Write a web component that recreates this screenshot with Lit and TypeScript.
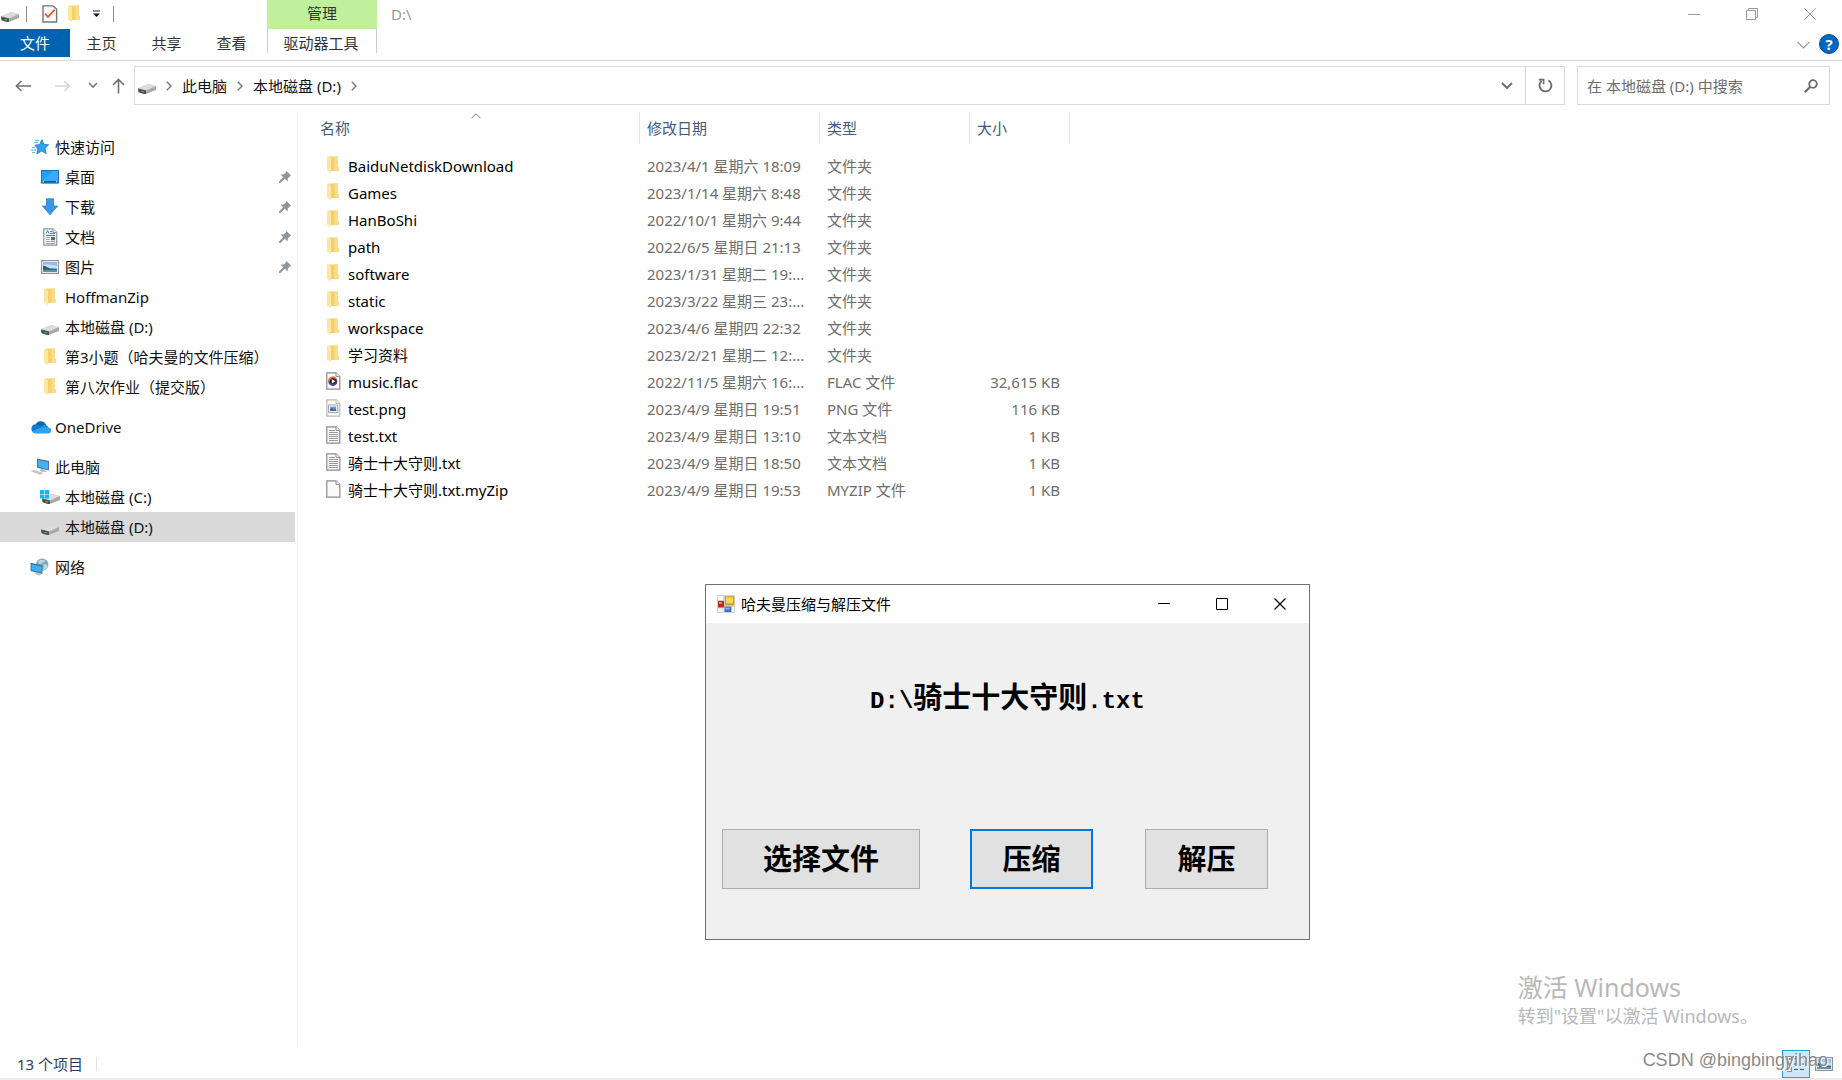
import { LitElement, html, css, svg, nothing, type TemplateResult } from "lit";
import { customElement } from "lit/decorators.js";
import { classMap } from "lit/directives/class-map.js";

const icon = (w: number, h: number, body: unknown) =>
  html`<svg class="ico" width=${w} height=${h} viewBox="0 0 ${w} ${h}" aria-hidden="true">${body}</svg>`;

const driveShape = svg`
  <path d="M0 7.5 L9 3.5 Q10 3 11 3.3 L18 5.2 V9 L9 12.6 Q7 13.3 5 12.6 L0.6 11 Z" fill="#a9a9a9"/>
  <path d="M0 7.2 L9 3.2 Q10 2.8 11 3.1 L18 5 L8 9.4 Z" fill="#dcdcdc"/>
  <path d="M0 7.4 L8 9.4 V13 L5 12.8 L0.6 11.2 Z" fill="#4c4f4c"/>
  <rect x="3.5" y="10" width="2.4" height="1.4" fill="#2fc24a"/>`;

const folderShape = svg`
  <path d="M3 0.5 H12 V11 L13 11.3 V15 H3 Z" fill="#f5d06f"/>
  <path d="M8.5 0.5 H12 V11 L13 11.3 V15 H8.5 Z" fill="#fbdc87"/>
  <path d="M1 0.5 H3 L5 2.6 V16.2 L4.2 17 L1 14.6 Z" fill="#ffe7a3"/>`;

const pageShape = (stroke = "#8a8a8a", fill = "#fbfbfb") => svg`
  <path d="M0.8 0.8 H10 L13.8 4.4 V17.2 H0.8 Z" fill=${fill} stroke=${stroke} stroke-width="1.2"/>
  <path d="M10 0.8 V4.4 H13.8" fill="#fff" stroke=${stroke} stroke-width="1"/>`;

const lines = svg`<path d="M3 4.5H9M3 6.5H12M3 8.5H12M3 10.5H12M3 12.5H12M3 14.5H12" stroke="#9a9a9a" stroke-width="1"/>`;

const icons: Record<string, () => TemplateResult> = {
  drive: () => icon(18, 16, svg`<g transform="translate(0 3)">${driveShape}</g>`),
  folder: () => icon(14, 18, folderShape),
  audio: () => icon(15, 18, svg`${pageShape()}
    <circle cx="6.8" cy="9.4" r="4.4" fill="#3a3350"/>
    <path d="M3 9.4 A4 4 0 0 1 10 6.6" fill="none" stroke="#ef6a3a" stroke-width="1.6"/>
    <path d="M3.2 10.8 A4 4 0 0 0 10.6 10.6" fill="none" stroke="#6f4d9b" stroke-width="1.2"/>
    <circle cx="6.9" cy="9.3" r="2.6" fill="#222"/>
    <path d="M5.8 6.9 L9.2 9.3 L5.8 11.7 Z" fill="#fff"/>`),
  image: () => icon(15, 18, svg`${pageShape("#b9b9b9")}
    <rect x="2.6" y="6" width="9.2" height="7.6" fill="#fff" stroke="#a5a5a5"/>
    <rect x="4.2" y="7.6" width="6" height="4.4" fill="#5f97dc"/>
    <path d="M4.2 9.8 L6 9.2 L8 10.4 L10.2 10.6 V12 H4.2 Z" fill="#3b6a78"/>`),
  text: () => icon(15, 18, svg`${pageShape()}${lines}`),
  blank: () => icon(15, 18, pageShape("#8a8a8a", "#fafafa")),
  star: () => icon(18, 16, svg`
    <path d="M11 0.6 L12.8 5.4 L17.6 5.8 L14 9.2 L15.2 14.6 L10.6 12 L5.8 14.8 L7 9.8 L3.8 6.2 L8.6 5.6 Z" fill="#2ea4ef" stroke="#1578c2" stroke-width="0.8"/>
    <path d="M4 1.6H8M3 3.6H7M1 8.6H4.4M0 11.2H5M1 13.6H4" stroke="#5bb3ee" stroke-width="1"/>`),
  desktop: () => icon(18, 14, svg`
    <rect x="0.5" y="0.5" width="17" height="12.6" fill="#1ea0fb" stroke="#1873b8"/>
    <path d="M1 11 L12 1 H17 V11 Z" fill="#37adff"/>
    <rect x="1" y="11" width="16" height="1.6" fill="#0f5f9f"/>
    <path d="M1.5 11.8H3M15 11.8H16.5" stroke="#fff" stroke-width="1"/>`),
  download: () => icon(18, 18, svg`
    <path d="M5.5 0.8 H12.5 V8 H16.6 L9 16.8 L1.4 8 H5.5 Z" fill="#3a96e6" stroke="#2a7cc8" stroke-width="0.8"/>`),
  document: () => icon(18, 18, svg`
    <g transform="translate(2 0)">${pageShape("#8d9299")}
    <path d="M3 5.6 L4.6 2.6 L6 5.6M7 3.4H9.4M7 5.4H12M3 7.5H12" stroke="#2b83c9" fill="none"/>
    <path d="M3 9.5H7M3 11.5H7M3 13.5H12M3 15.5H12" stroke="#a3a9af"/>
    <rect x="8" y="9" width="4" height="3.2" fill="#3f6f9c"/></g>`),
  picture: () => icon(18, 14, svg`
    <rect x="0.6" y="0.6" width="16.8" height="12.8" fill="#fff" stroke="#8d9299" stroke-width="1.2"/>
    <rect x="2" y="2" width="14" height="10" fill="#8cbcf2"/>
    <path d="M2 5 Q6 3 16 6 V8 H2 Z" fill="#c7e0fa"/>
    <path d="M2 5.4 L5 6.4 L9 8.6 L16 9 V10 H2 Z" fill="#2f6257"/>
    <path d="M2 9.8 H16 V12 H2 Z" fill="#5b93b5"/>`),
  cloud: () => icon(21, 14, svg`
    <path d="M5.6 4.6 A5.6 5.6 0 0 1 15.4 3.6 L16.4 5.4 L10 9 Z" fill="#0f62b5"/>
    <path d="M4.6 13 A4.5 4.5 0 0 1 5 4.3 Q8 3.8 11 6.6 L5 13 Z" fill="#0a78d4"/>
    <path d="M11 6.4 Q13 4.4 15.8 5 A4.2 4.2 0 0 1 18.6 7.8 L12 9 Z" fill="#1590df"/>
    <path d="M2 11.6 L11 7.6 L18.8 7.6 A2.9 2.9 0 0 1 17.8 13.4 H5 Q3 13.2 2 11.6 Z" fill="#2aa4ea"/>`),
  computer: () => icon(20, 18, svg`
    <path d="M7 0.6 L19 3 V12.6 L7 9.8 Z" fill="#4f6f86"/>
    <path d="M8 2 L18.2 4 V11.4 L8 8.8 Z" fill="#3fb2fb"/>
    <path d="M11 11 L14 11.8 L17 14 L13 14.2 L9.4 12.8 Z" fill="#b6bcc2"/>
    <path d="M0.6 13.2 L4 11.8 L13.4 15 L10 17 Z" fill="#d5d9dd"/>
    <path d="M2.4 13.2 L11.4 16M4.6 12.6 L12.4 15.2" stroke="#aab0b6" stroke-width="0.6"/>`),
  windrive: () => icon(20, 16, svg`
    <g transform="translate(2 2)">${driveShape}</g>
    <path d="M0 1 H4.4 V5 H0Z M5 1 H9 V5 H5Z M0 5.6 H4.4 V9.4 H0Z M5 5.6 H9 V9.4 H5Z" fill="#14b4f0"/>`),
  network: () => icon(20, 18, svg`
    <circle cx="12.2" cy="6.6" r="6.2" fill="#7fa9bd"/>
    <path d="M8 3 Q12 0.6 15 2.6 Q13 6 9 6 Z M14 6 Q18 6 17.6 9 Q16 12 13 12 Z" fill="#b9d6e2"/>
    <path d="M0.6 4.8 L12.4 7.6 V16 L0.6 13 Z" fill="#40718f"/>
    <path d="M1.6 6.2 L11.6 8.6 V14.6 L1.6 12 Z" fill="#3db0fa"/>
    <path d="M4 15 L7 15 L11.6 16.4 L8.6 17.4 Z" fill="#b4bac0"/>`),
  pin: () => icon(12, 12, svg`
    <path d="M7.4 0 L12 4.6 L10.8 5.4 L8.8 7.4 L8.6 10.4 L5.8 7.8 L1.4 12 L0 12 V10.6 L4.2 6.2 L1.6 3.6 L4.8 3.4 L6.8 1.4 Z" fill="#8c969f"/>`),
  check: () => icon(16, 18, svg`
    <path d="M1 0.9 H11 L14.6 4 V17 H1 Z" fill="#fcfcfc" stroke="#757575" stroke-width="1.4"/>
    <path d="M3 8.6 L6 12 L12.6 4.6" fill="none" stroke="#f0531c" stroke-width="1.8"/>`),
  form: () => icon(18, 18, svg`
    <rect width="18" height="18" fill="#d2d2d2"/>
    <rect x="1" y="1" width="5" height="4" fill="#fff"/><rect x="15" y="12" width="2" height="5" fill="#fff"/>
    <rect x="1" y="6" width="6" height="6.4" fill="#b52a1d"/><rect x="2" y="7" width="3" height="2" fill="#e88573"/>
    <rect x="8" y="1.4" width="9.2" height="8.8" fill="#d09b16"/><rect x="9" y="2.4" width="7" height="6" fill="#ffd84d"/>
    <rect x="7.6" y="11.6" width="6.6" height="5.4" fill="#3a6ed0"/><rect x="8.6" y="12.6" width="4" height="2" fill="#8fb4f4"/>
    <rect x="1" y="13.4" width="5.4" height="3.6" fill="#f2f2f2"/>`),
};

const stroke = (w: number, h: number, d: string, color: string, width = 1) =>
  icon(w, h, svg`<path d=${d} fill="none" stroke=${color} stroke-width=${width}/>`);

interface NavItem { icon: string; label: string; root?: boolean; pinned?: boolean; current?: boolean; }
const groups: NavItem[][] = [
  [
    { icon: "star", label: "快速访问", root: true },
    { icon: "desktop", label: "桌面", pinned: true },
    { icon: "download", label: "下载", pinned: true },
    { icon: "document", label: "文档", pinned: true },
    { icon: "picture", label: "图片", pinned: true },
    { icon: "folder", label: "HoffmanZip" },
    { icon: "drive", label: "本地磁盘 (D:)" },
    { icon: "folder", label: "第3小题（哈夫曼的文件压缩）" },
    { icon: "folder", label: "第八次作业（提交版）" },
  ],
  [{ icon: "cloud", label: "OneDrive", root: true }],
  [
    { icon: "computer", label: "此电脑", root: true },
    { icon: "windrive", label: "本地磁盘 (C:)" },
    { icon: "drive", label: "本地磁盘 (D:)", current: true },
  ],
  [{ icon: "network", label: "网络", root: true }],
];

const files: [string, string, string, string, string][] = [
  ["folder", "BaiduNetdiskDownload", "2023/4/1 星期六 18:09", "文件夹", ""],
  ["folder", "Games", "2023/1/14 星期六 8:48", "文件夹", ""],
  ["folder", "HanBoShi", "2022/10/1 星期六 9:44", "文件夹", ""],
  ["folder", "path", "2022/6/5 星期日 21:13", "文件夹", ""],
  ["folder", "software", "2023/1/31 星期二 19:...", "文件夹", ""],
  ["folder", "static", "2023/3/22 星期三 23:...", "文件夹", ""],
  ["folder", "workspace", "2023/4/6 星期四 22:32", "文件夹", ""],
  ["folder", "学习资料", "2023/2/21 星期二 12:...", "文件夹", ""],
  ["audio", "music.flac", "2022/11/5 星期六 16:...", "FLAC 文件", "32,615 KB"],
  ["image", "test.png", "2023/4/9 星期日 19:51", "PNG 文件", "116 KB"],
  ["text", "test.txt", "2023/4/9 星期日 13:10", "文本文档", "1 KB"],
  ["text", "骑士十大守则.txt", "2023/4/9 星期日 18:50", "文本文档", "1 KB"],
  ["blank", "骑士十大守则.txt.myZip", "2023/4/9 星期日 19:53", "MYZIP 文件", "1 KB"],
];

const base = css`
  * { box-sizing: border-box; }
  button, input { font: inherit; color: inherit; border: 0; background: none; padding: 0; margin: 0; flex: none; }
  a { color: inherit; text-decoration: none; }
  .ico { display: block; flex: none; }
`;

@customElement("explorer-header")
class ExplorerHeader extends LitElement {
  static styles = [base, css`
    :host { display: block; }
    .title { display: flex; height: 29px; color: #999; }
    .quick { width: 267px; display: flex; align-items: center; padding: 0 0 2px 1px; }
    .quick button { display: flex; justify-content: center; }
    .rule { width: 1px; height: 16px; background: #8f8f8f; }
    .q1 { margin-right: 7px; }
    .q2 { margin: 0 9px 0 15px; }
    .q3 { margin-right: 12px; }
    .q4 { margin-right: 13px; }
    .context { width: 110px; background: #c0f09b; color: #333; text-align: center; line-height: 26px; }
    .path { flex: 1; padding-left: 14px; line-height: 28px; }
    .controls { display: flex; padding-right: 3px; }
    .controls button { width: 58px; height: 27px; display: flex; align-items: center; justify-content: center; }
    .tabs { display: flex; height: 32px; border-bottom: 1px solid #d9dadb; color: #333; }
    .tabs button { width: 65px; height: 28px; line-height: 28px; padding-right: 2px; }
    .tabs .file { width: 70px; background: #0063b1; color: #fff; padding: 0; }
    .tabs .tool { width: 110px; margin-left: 2px; height: 24px; border: solid #ccc; border-width: 0 1px; }
    .fill { flex: 1; }
    .tabs .min { width: 22px; display: flex; align-items: center; justify-content: center; padding: 3px 0 0; }
    .tabs .help { width: 20px; height: 20px; margin: 5px 3px 0 5px; border-radius: 50%; background: #0067c6; border: 1px solid #114f8c; color: #fff; line-height: 18px; font-weight: 700; padding: 0; }
    .bar { display: flex; align-items: center; padding: 5px 12px 7px 15px; height: 51px; }
    .go { display: flex; align-items: center; justify-content: center; height: 32px; }
    .back { width: 17px; margin-right: 22px; }
    .fwd { width: 17px; margin-right: 16px; }
    .hist { width: 11px; margin-right: 13px; }
    .up { width: 14px; margin-right: 9px; }
    .address, .search { height: 39px; border: 1px solid #d9d9d9; display: flex; align-items: center; }
    .address { flex: 1; padding-left: 3px; gap: 10px; color: #111; }
    .address .end { width: 37px; height: 37px; display: flex; align-items: center; justify-content: center; }
    .address .refresh { width: 39px; border-left: 1px solid #d9d9d9; }
    .join { display: flex; }
    .search { width: 253px; margin-left: 12px; padding: 0 11px 0 9px; }
    .search input { flex: 1; min-width: 0; outline: none; color: #666; }
    .search input::placeholder { color: #6d6d6d; opacity: 1; }
  `];
  render() {
    const sep = stroke(6, 10, "M0.8 0.8 L5 5 L0.8 9.2", "#777", 1.4);
    return html`
      <div class="title">
        <div class="quick">
          <button class="q1" aria-label="驱动器">${icons.drive()}</button><span class="rule"></span>
          <button class="q2" aria-label="属性">${icons.check()}</button>
          <button class="q3" aria-label="新建文件夹">${icons.folder()}</button>
          <button class="q4" aria-label="自定义">${icon(7, 8, svg`<path d="M0 1H7" stroke="#222"/><path d="M0 3.6H7L3.5 7Z" fill="#111"/>`)}</button>
          <span class="rule"></span>
        </div>
        <div class="context">管理</div>
        <div class="path">D:\\</div>
        <div class="controls">
          <button aria-label="最小化">${stroke(12, 12, "M0 6.5H12", "#999")}</button>
          <button aria-label="还原">${stroke(12, 12, "M0.5 2.5H9.5V11.5H0.5Z M2.5 2.5V0.5H11.5V9.5H9.5", "#999")}</button>
          <button aria-label="关闭">${stroke(12, 12, "M0.3 0.3L11.7 11.7M11.7 0.3L0.3 11.7", "#999")}</button>
        </div>
      </div>
      <div class="tabs">
        <button class="file">文件</button><button>主页</button><button>共享</button><button>查看</button>
        <button class="tool">驱动器工具</button>
        <span class="fill"></span>
        <button class="min" aria-label="展开功能区">${stroke(13, 8, "M0.5 0.8L6.5 6.8L12.5 0.8", "#999", 1.2)}</button>
        <button class="help" aria-label="帮助">?</button>
      </div>
      <div class="bar">
        <button class="go back" aria-label="后退">${stroke(17, 12, "M16 6H1.4M6.4 1L1.4 6L6.4 11", "#707070", 1.6)}</button>
        <button class="go fwd" aria-label="前进">${stroke(17, 12, "M1 6H15.4M10.4 1L15.4 6L10.4 11", "#d4d4d4", 1.6)}</button>
        <button class="go hist" aria-label="历史">${stroke(10, 7, "M1 1L5 5L9 1", "#7a7a7a", 1.6)}</button>
        <button class="go up" aria-label="向上">${stroke(13, 16, "M6.5 15.6V1.6M1 7L6.5 1.5L12 7", "#707070", 1.6)}</button>
        <div class="address">
          ${icons.drive()}${sep}<a href="#pc">此电脑</a>${sep}<a href="#d">本地磁盘 (D:)</a>${sep}
          <span class="fill"></span>
          <div class="join">
            <button class="end" aria-label="地址列表">${stroke(12, 8, "M1 1L6 6L11 1", "#707070", 2)}</button>
            <button class="end refresh" aria-label="刷新">${icon(15, 15, svg`<path d="M3.6 2.8A6 6 0 1 0 10.4 2.2" fill="none" stroke="#6c6c6c" stroke-width="1.8"/><path d="M0.8 1.6H5.6V6.2" fill="none" stroke="#6c6c6c" stroke-width="1.6"/>`)}</button>
          </div>
        </div>
        <label class="search">
          <input type="text" aria-label="搜索" placeholder="在 本地磁盘 (D:) 中搜索">
          ${icon(14, 14, svg`<circle cx="9" cy="5" r="3.8" fill="none" stroke="#6a6a6a" stroke-width="1.8"/><path d="M6.2 7.8L0.8 13.2" stroke="#6a6a6a" stroke-width="2.2"/>`)}
        </label>
      </div>`;
  }
}

@customElement("explorer-nav")
class ExplorerNav extends LitElement {
  static styles = [base, css`
    :host { display: block; }
    nav { width: 298px; height: 100%; padding: 20px 2px 0 0; border-right: 1px solid #f3f3f3; display: flex; flex-direction: column; gap: 10px; }
    .item { display: flex; align-items: center; height: 30px; padding-left: 39px; color: #111; white-space: nowrap; }
    .item.root { padding-left: 29px; }
    .item.current { background: #d9d9d9; }
    .slot { width: 22px; display: flex; justify-content: center; margin-right: 4px; }
    .label { flex: 1; }
    .pin { margin-right: 4px; }
  `];
  render() {
    return html`<nav aria-label="导航">${groups.map((g) => html`<div class="group">${g.map((i) => html`
      <a href="#" class=${classMap({ item: true, root: !!i.root, current: !!i.current })}>
        <span class="slot">${icons[i.icon]()}</span><span class="label">${i.label}</span>
        ${i.pinned ? html`<span class="pin">${icons.pin()}</span>` : nothing}
      </a>`)}</div>`)}</nav>`;
  }
}

@customElement("file-list")
class FileList extends LitElement {
  static styles = [base, css`
    :host { display: block; flex: 1; min-width: 0; padding-left: 15px; }
    table { table-layout: fixed; width: 757px; border-collapse: separate; border-spacing: 0; }
    .name { width: 327px; } .date { width: 180px; } .type { width: 150px; } .size { width: 100px; }
    th { height: 32px; padding: 0 0 0 7px; text-align: left; font-weight: 400; color: #43597a; border-right: 1px solid #e3e3e3; position: relative; }
    .sort { position: absolute; top: 1px; left: 50%; margin-left: -5px; }
    .gap td { height: 8px; padding: 0; }
    td { height: 27px; padding: 0 0 0 7px; color: #6d6d6d; white-space: nowrap; overflow: hidden; line-height: 24px; }
    .file { display: flex; align-items: center; gap: 6px; padding-left: 6px; color: #000; height: 27px; }
    .file .slot { width: 16px; display: flex; height: 22px; align-items: center; padding-bottom: 2px; }
    .num { text-align: right; padding-right: 10px; }
  `];
  render() {
    return html`<table>
      <colgroup><col class="name"><col class="date"><col class="type"><col class="size"></colgroup>
      <thead><tr>
        <th scope="col">名称<span class="sort">${stroke(10, 6, "M0.6 5.2L5 0.8L9.4 5.2", "#777", 1)}</span></th>
        <th scope="col">修改日期</th><th scope="col">类型</th><th scope="col">大小</th>
      </tr></thead>
      <tbody>
        <tr class="gap"><td colspan="4"></td></tr>
        ${files.map(([ic, name, date, type, size]) => html`<tr>
          <td><a class="file" href="#"><span class="slot">${icons[ic]()}</span>${name}</a></td>
          <td>${date}</td><td>${type}</td><td class="num">${size}</td></tr>`)}
      </tbody></table>`;
  }
}

@customElement("zip-dialog")
class ZipDialog extends LitElement {
  static styles = [base, css`
    :host { display: block; }
    .window { width: 605px; border: 1px solid #707070; background: #f0f0f0; color: #000; }
    .head { display: flex; align-items: center; height: 38px; background: #fff; padding-left: 11px; }
    .caption { flex: 1; padding-left: 6px; }
    .head button { width: 58px; height: 38px; display: flex; align-items: center; justify-content: center; }
    .body { padding: 56px 16px 50px; font-size: 29px; font-weight: 700; }
    .file { margin: 0; height: 36px; line-height: 36px; text-align: center; }
    .half { font-family: "Liberation Mono", monospace; font-size: 24px; }
    .actions { display: flex; padding-top: 114px; }
    .actions button { width: 123px; height: 60px; line-height: 56px; background: #e1e1e1; border: 1px solid #adadad; margin-right: 52px; }
    .actions .pick { width: 198px; margin-right: 50px; }
    .actions .focus { border: 2px solid #0078d7; }
    .actions button:last-child { margin-right: 0; }
  `];
  render() {
    return html`<section class="window" role="dialog" aria-label="哈夫曼压缩与解压文件">
      <div class="head">${icons.form()}<span class="caption">哈夫曼压缩与解压文件</span>
        <button aria-label="最小化">${stroke(12, 12, "M0 5.5H12", "#000")}</button>
        <button aria-label="最大化">${stroke(12, 12, "M0.5 0.5H11.5V11.5H0.5Z", "#000")}</button>
        <button aria-label="关闭">${stroke(12, 12, "M0.5 0.5L11.5 11.5M11.5 0.5L0.5 11.5", "#000", 1.2)}</button></div>
      <div class="body">
        <p class="file"><span class="half">D:\\</span>骑士十大守则<span class="half">.txt</span></p>
        <div class="actions"><button class="pick">选择文件</button><button class="focus">压缩</button><button>解压</button></div>
      </div></section>`;
  }
}

@customElement("app-root")
class AppRoot extends LitElement {
  static styles = [base, css`
    :host { display: flex; flex-direction: column; min-height: 100vh; position: relative; overflow: hidden; background: #fff; color: #333;
      font: 15px/22px "Noto Sans", "Noto Sans CJK SC", sans-serif; }
    .main { flex: 1; display: flex; }
    .status { display: flex; align-items: center; height: 30px; padding: 0 9px 0 17px; border-bottom: 2px solid #ededed; color: #2a3f61; }
    .count { border-right: 1px solid #e6e6e6; padding-right: 13px; line-height: 14px; flex: none; }
    .fill { flex: 1; }
    .status button { display: flex; align-items: center; justify-content: center; width: 28px; height: 28px; }
    .status .on { background: #cbe8f6; border: 1px solid #26a0da; }
    .status .thumbs { width: 18px; margin-left: 5px; }
    .dialog { position: absolute; left: 705px; top: 584px; }
    .activate { position: absolute; right: 84px; bottom: 50px; color: #b8b8b8; font-size: 18px; line-height: 28px; }
    .big { font-size: 25px; line-height: 30px; }
    .credit { position: absolute; right: 14px; bottom: 9px; font: 18px/22px "Liberation Sans", sans-serif; color: #8b8b8b; text-shadow: 1px 1px #fff; }
  `];
  render() {
    return html`
      <explorer-header></explorer-header>
      <div class="main"><explorer-nav></explorer-nav><file-list></file-list></div>
      <div class="status">
        <span class="count">13 个项目</span><span class="fill"></span>
        <button class="on" aria-label="详细信息">${icon(18, 16, svg`
          <path d="M0.5 0.5H4.5V15.5H0.5Z" fill="#fff" stroke="#8a8a8a"/><rect x="1.6" y="2" width="2" height="2" fill="#3d9a4a"/><rect x="1.6" y="7" width="2" height="2" fill="#d9a52c"/><rect x="1.6" y="12" width="2" height="2" fill="#c8401f"/>
          <path d="M7 2.5H11M13 2.5H17M7 8H11M13 8H17M7 13.5H11M13 13.5H17" stroke="#555"/>`)}</button>
        <button class="thumbs" aria-label="缩略图">${icons.picture()}</button>
      </div>
      <zip-dialog class="dialog"></zip-dialog>
      <div class="activate"><div class="big">激活 Windows</div><div>转到"设置"以激活 Windows。</div></div>
      <div class="credit">CSDN @bingbingyihao</div>`;
  }
}
